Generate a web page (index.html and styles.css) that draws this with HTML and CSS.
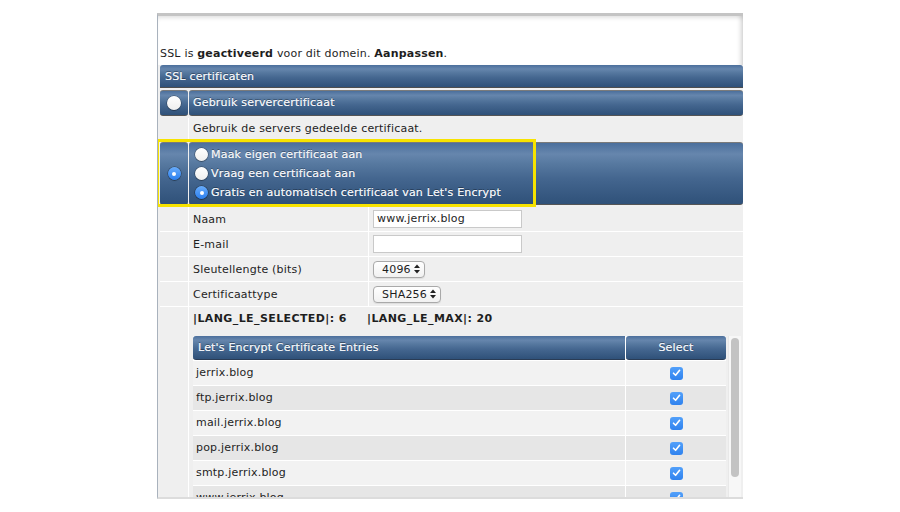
FILE: index.html
```html
<!DOCTYPE html>
<html>
<head>
<meta charset="utf-8">
<link rel="stylesheet" href="styles.css">
</head>
<body>
<div class="page">
  <div class="intro">SSL is <b>geactiveerd</b> voor dit domein. <b>Aanpassen</b>.</div>
  <div class="sect">
    <div class="title">SSL certificaten</div>
    <div class="opt opt-server">
      <div class="cell blue radio-cell"><span class="radio big"></span></div>
      <div class="cell blue head-label">Gebruik servercertificaat</div>
    </div>
    <div class="opt opt-desc">
      <div class="cell light"></div>
      <div class="cell light desc">Gebruik de servers gedeelde certificaat.</div>
    </div>
    <div class="opt opt-own">
      <div class="cell blue radio-cell"><span class="radio on"></span></div>
      <div class="cell blue choices">
        <div class="choice"><span class="radio"></span>Maak eigen certificaat aan</div>
        <div class="choice"><span class="radio"></span>Vraag een certificaat aan</div>
        <div class="choice"><span class="radio on"></span>Gratis en automatisch certificaat van Let's Encrypt</div>
      </div>
      <div class="highlight"></div>
    </div>
    <div class="form">
      <div></div><div class="lbl">Naam</div><div class="val"><span class="inp">www.jerrix.blog</span></div>
      <div></div><div class="lbl">E-mail</div><div class="val"><span class="inp"></span></div>
      <div></div><div class="lbl">Sleutellengte (bits)</div><div class="val"><span class="sel">4096<svg class="arr" width="6" height="10" viewBox="0 0 6 10"><polygon points="0,4 3,0.5 6,4" /><polygon points="0,6 3,9.5 6,6" /></svg></span></div>
      <div></div><div class="lbl">Certificaattype</div><div class="val"><span class="sel">SHA256<svg class="arr" width="6" height="10" viewBox="0 0 6 10"><polygon points="0,4 3,0.5 6,4" /><polygon points="0,6 3,9.5 6,6" /></svg></span></div>
      <div class="left-last"></div>
      <div class="last">
        <div class="lang"><span class="lang-a">|LANG_LE_SELECTED|: 6</span><span>|LANG_LE_MAX|: 20</span></div>
        <div class="tablewrap">
          <div class="etable">
            <div class="th th-name">Let's Encrypt Certificate Entries</div>
            <div class="th th-sel">Select</div>
            <div class="td odd">jerrix.blog</div><div class="td odd ck"><span class="cb"><svg width="9" height="8" viewBox="0 0 9 8"><path d="M1.5 4.2 L3.6 6.3 L7.6 1.3" fill="none" stroke="#fff" stroke-width="1.6" stroke-linecap="round" stroke-linejoin="round"/></svg></span></div>
            <div class="td even">ftp.jerrix.blog</div><div class="td even ck"><span class="cb"><svg width="9" height="8" viewBox="0 0 9 8"><path d="M1.5 4.2 L3.6 6.3 L7.6 1.3" fill="none" stroke="#fff" stroke-width="1.6" stroke-linecap="round" stroke-linejoin="round"/></svg></span></div>
            <div class="td odd">mail.jerrix.blog</div><div class="td odd ck"><span class="cb"><svg width="9" height="8" viewBox="0 0 9 8"><path d="M1.5 4.2 L3.6 6.3 L7.6 1.3" fill="none" stroke="#fff" stroke-width="1.6" stroke-linecap="round" stroke-linejoin="round"/></svg></span></div>
            <div class="td even">pop.jerrix.blog</div><div class="td even ck"><span class="cb"><svg width="9" height="8" viewBox="0 0 9 8"><path d="M1.5 4.2 L3.6 6.3 L7.6 1.3" fill="none" stroke="#fff" stroke-width="1.6" stroke-linecap="round" stroke-linejoin="round"/></svg></span></div>
            <div class="td odd">smtp.jerrix.blog</div><div class="td odd ck"><span class="cb"><svg width="9" height="8" viewBox="0 0 9 8"><path d="M1.5 4.2 L3.6 6.3 L7.6 1.3" fill="none" stroke="#fff" stroke-width="1.6" stroke-linecap="round" stroke-linejoin="round"/></svg></span></div>
            <div class="td even">www.jerrix.blog</div><div class="td even ck"><span class="cb"><svg width="9" height="8" viewBox="0 0 9 8"><path d="M1.5 4.2 L3.6 6.3 L7.6 1.3" fill="none" stroke="#fff" stroke-width="1.6" stroke-linecap="round" stroke-linejoin="round"/></svg></span></div>
          </div>
          <div class="scrollbar"><div class="thumb"></div></div>
        </div>
      </div>
    </div>
  </div>
</div>
</body>
</html>
```
FILE: styles.css
```css
* { box-sizing: border-box; }
body {
  margin: 0;
  background: #fff;
  font-family: "DejaVu Sans", Verdana, sans-serif;
  font-size: 11px;
  letter-spacing: 0.2px;
  color: #1e1e1e;
}
.page {
  margin: 13px 0 0 157px;
  width: 586px;
  height: 486px;
  border-top: 3px solid #c4c4c4;
  border-left: 1px solid #a9b2bd;
  border-bottom: 2px solid #dcdcdc;
  background: #f0f0f0;
  overflow: hidden;
}
.intro {
  height: 49px;
  background: #fff;
  padding: 31px 0 0 2px;
  line-height: 14px;
  box-shadow: inset 0 4px 4px -2px rgba(0,0,0,0.12), inset -6px 0 5px -4px rgba(0,0,0,0.18);
}
.sect { padding-left: 2px; }
.title, .blue, .th {
  background: linear-gradient(to bottom, #4b6f9c 0%, #6686ad 18%, #56789f 35%, #44668f 58%, #2f5179 100%);
  color: #eef2f7;
  text-shadow: 0 -1px 0 rgba(0,0,0,0.35), 0 0 0.4px #eef2f7;
}
.title {
  height: 23px;
  line-height: 23px;
  padding-left: 5px;
  border-radius: 3px 3px 0 0;
  border-bottom: 1px solid #4e4e4e;
  margin-bottom: 2px;
}
.opt {
  display: grid;
  grid-template-columns: 28px 1fr;
  column-gap: 1px;
  margin-bottom: 2px;
}
.blue {
  border-radius: 3px;
  border-top: 1px solid #7a7a7a;
  border-bottom: 1px solid #555;
}
.opt-server { height: 26px; }
.radio-cell {
  display: flex;
  align-items: center;
  justify-content: center;
}
.head-label {
  line-height: 24px;
  padding-left: 4px;
}
.opt-desc { height: 22px; background: #fff; }
.light { background: #efefef; }
.desc { line-height: 22px; padding-left: 4px; }
.opt-own { height: 63px; position: relative; }
.choices {
  display: flex;
  flex-direction: column;
  padding: 2px 0 0 6px;
}
.choice {
  height: 19px;
  display: flex;
  align-items: center;
}
.choice .radio { margin-right: 3px; }
.radio {
  display: inline-block;
  width: 13px;
  height: 13px;
  border-radius: 50%;
  background: linear-gradient(#ffffff, #eeeeee);
  box-shadow: 0 0 0 0.5px rgba(0,0,0,0.45), 0 1px 1px rgba(0,0,0,0.2);
  position: relative;
  flex: none;
}
.radio.big { width: 14px; height: 14px; }
.radio.on {
  background: linear-gradient(#68acfb, #2b7fef);
}
.radio.on::after {
  content: "";
  position: absolute;
  left: 4.5px;
  top: 4.5px;
  width: 4px;
  height: 4px;
  border-radius: 50%;
  background: #fff;
}
.highlight {
  position: absolute;
  left: -4px;
  top: -3px;
  width: 380px;
  height: 68px;
  border: 3px solid #f7e300;
  pointer-events: none;
}
.form {
  display: grid;
  grid-template-columns: 28px 179px 1fr;
  grid-template-rows: 24px 24px 24px 24px 200px;
  gap: 1px;
  background: #fff;
}
.form > div { background: #efefef; }
.lbl, .val {
  display: flex;
  align-items: center;
  padding-left: 4px;
}
.inp {
  display: block;
  width: 149px;
  height: 18px;
  border: 1px solid #c9c9c9;
  background: #fff;
  padding-left: 3px;
  line-height: 16px;
}
.sel {
  display: inline-flex;
  align-items: center;
  height: 17px;
  border: 1px solid #a9a9a9;
  border-radius: 4px;
  background: linear-gradient(#ffffff, #f1f1f1);
  padding: 0 4px 0 8px;
  gap: 3px;
  box-shadow: 0 1px 1px rgba(0,0,0,0.08);
}
.arr polygon { fill: #222; }
.last { grid-column: 2 / span 2; }
.lang {
  height: 24px;
  line-height: 24px;
  padding-left: 4px;
  font-weight: bold;
  letter-spacing: 0.4px;
}
.lang-a { display: inline-block; width: 174px; }
.tablewrap {
  display: flex;
  margin: 5px 0 0 4px;
  height: 161px;
  overflow: hidden;
}
.etable {
  width: 533px;
  display: grid;
  grid-template-columns: 432px 1fr;
  grid-auto-rows: 24px;
  gap: 1px;
  align-content: start;
  background: #fff;
}
.th {
  border-radius: 3px;
  border-bottom: 1px solid #2a3c55;
  line-height: 23px;
}
.th-name { padding-left: 5px; border-radius: 3px 0 0 3px; }
.th-sel { text-align: center; }
.td { padding-left: 3px; line-height: 24px; }
.odd { background: #f2f2f2; }
.even { background: #e6e6e6; }
.ck {
  display: flex;
  align-items: center;
  justify-content: center;
  padding-left: 0;
}
.cb {
  width: 13px;
  height: 13px;
  border-radius: 3px;
  background: linear-gradient(#52a0fa, #2f82ee);
  display: flex;
  align-items: center;
  justify-content: center;
}
.scrollbar {
  margin-left: 2px;
  width: 13px;
  background: #f7f7f7;
  border-left: 1px solid #e8e8e8;
  padding: 2px 0 0 2px;
}
.thumb {
  width: 8px;
  height: 139px;
  border-radius: 4px;
  background: #c3c3c3;
}
```
